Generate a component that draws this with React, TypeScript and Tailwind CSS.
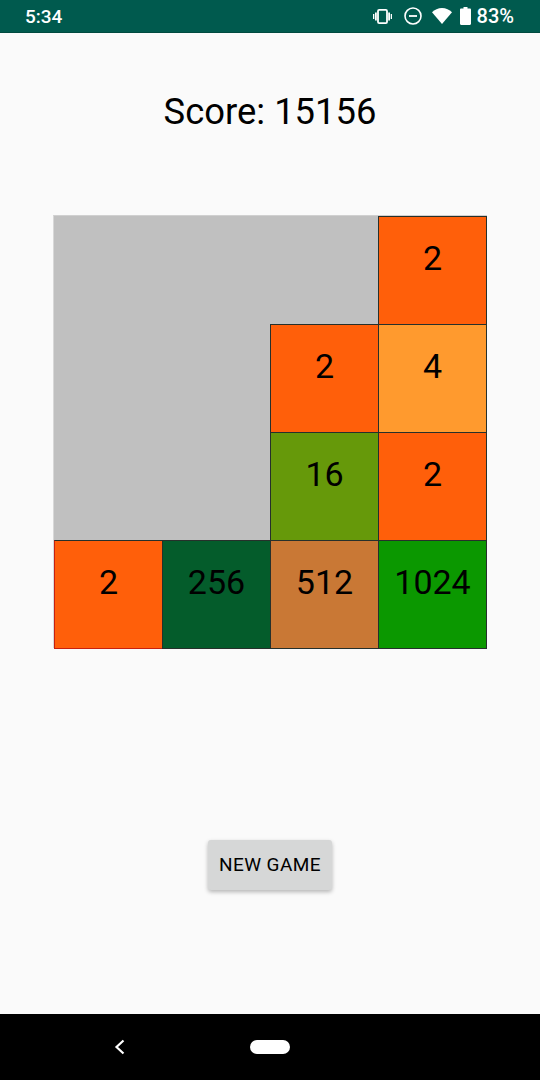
const tiles: { v: string; c: string; extra?: string }[][] = [
  [{ v: "", c: "" }, { v: "", c: "" }, { v: "", c: "" }, { v: "2", c: "bg-[#ff5f0a]" }],
  [{ v: "", c: "" }, { v: "", c: "" }, { v: "2", c: "bg-[#ff5f0a]" }, { v: "4", c: "bg-[#ff9a2e]" }],
  [{ v: "", c: "" }, { v: "", c: "" }, { v: "16", c: "bg-[#66990a]" }, { v: "2", c: "bg-[#ff5f0a]" }],
  [
    { v: "2", c: "bg-[#ff5f0a]", extra: "border-l-[#c8200f] border-b-[#c8200f]" },
    { v: "256", c: "bg-[#045c2b]" },
    { v: "512", c: "bg-[#c97835]" },
    { v: "1024", c: "bg-[#0b9800]" },
  ],
];

function StatusIcons() {
  return (
    <div className="flex items-center">
      <svg width="19" height="15" viewBox="0 0 19 15" fill="none" className="mr-[12px]">
        <rect x="5" y="0.900" width="9" height="13.200" rx="1.200" stroke="white" strokeWidth="1.800" />
        <rect x="2" y="3.500" width="1.800" height="8" fill="white" />
        <rect x="15.200" y="3.500" width="1.800" height="8" fill="white" />
        <rect x="0" y="5" width="1.300" height="5" fill="white" />
        <rect x="17.700" y="5" width="1.300" height="5" fill="white" />
      </svg>
      <svg width="18" height="18" viewBox="0 0 18 18" fill="none" className="mr-[10px]">
        <circle cx="9" cy="9" r="8" stroke="white" strokeWidth="1.600" />
        <rect x="5" y="8.100" width="8" height="1.800" fill="white" />
      </svg>
      <svg width="20" height="16" viewBox="0 0 20 16" className="mr-[8px]">
        <path d="M0 4.300C2.600 1.600 6.100 0 10 0s7.400 1.600 10 4.300L10 16z" fill="white" />
      </svg>
      <svg width="11" height="18" viewBox="0 0 11 18" className="mr-[6px] -mt-[1px]">
        <path d="M3.500 0h4v1.600h2.300c.7 0 1.200.5 1.200 1.200v14c0 .7-.5 1.200-1.200 1.200H1.200C.5 18 0 17.500 0 16.800v-14c0-.7.5-1.200 1.200-1.200h2.300z" fill="white" />
      </svg>
      <span className="text-[20px] leading-none font-medium text-white">83%</span>
    </div>
  );
}

export default function App() {
  return (
    <div className="flex h-[1080px] w-[540px] flex-col overflow-hidden bg-[#fafafa] font-['Roboto',sans-serif] text-black antialiased">
      <div className="flex h-[33px] shrink-0 items-center justify-between border-b border-b-[#004a40] bg-[#005a4e] pl-[25px] pr-[26px]">
        <span className="text-[19px] leading-none font-medium text-white">5:34</span>
        <StatusIcons />
      </div>

      <div className="flex flex-1 flex-col items-center">
        <div className="mt-[59px] text-[36.400px] leading-[40px] font-normal">Score: 15156</div>

        <div className="mt-[83px] grid w-[434px] grid-cols-[repeat(4,108px)] border-t border-l border-t-[#d0d0d0] border-l-[#d8d8d8] bg-[#c0c0c0]">
          {tiles.flat().map((t, i) =>
            t.v ? (
              <div
                key={i}
                className={`-mb-px flex h-[109px] w-[109px] items-center justify-center border border-[#26302b] pb-[26px] text-[34px] leading-none font-normal ${t.c} ${t.extra ?? ""}`}
              >
                {t.v}
              </div>
            ) : (
              <div key={i} className="h-[108px]" />
            ),
          )}
        </div>

        <button className="mt-[192px] flex h-[50px] w-[124px] items-center justify-center rounded-[3px] bg-[#d6d7d7] text-[19px] font-normal tracking-[0.45px] shadow-[0_2px_4px_rgba(0,0,0,0.28)]">
          NEW GAME
        </button>
      </div>

      <div className="flex h-[66px] shrink-0 items-center bg-black pl-[113px]">
        <svg width="12" height="16" viewBox="0 0 12 16" fill="none">
          <path d="M10.500 1.500L3.500 8l7 6.500" stroke="white" strokeWidth="2.200" />
        </svg>
        <div className="ml-[125px] h-[14px] w-[40px] rounded-full bg-white" />
      </div>
    </div>
  );
}
